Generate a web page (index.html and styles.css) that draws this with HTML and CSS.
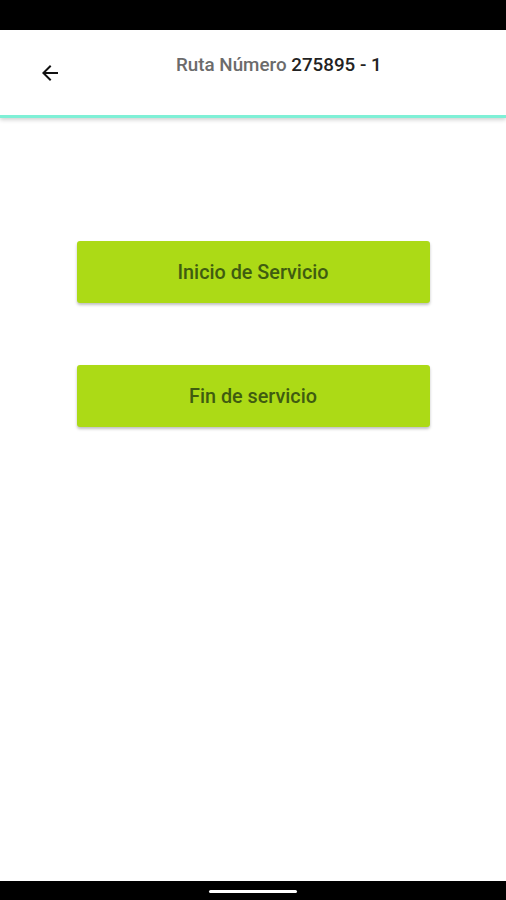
FILE: index.html
```html
<!DOCTYPE html>
<html lang="es">
<head>
    <meta charset="UTF-8">
    <title>Ruta</title>
    <link rel="stylesheet" href="styles.css">
</head>
<body>
<div class="status"></div>
<div class="header">
    <button class="back">
        <svg width="24" height="24" viewBox="0 0 24 24"><path d="M20 11H7.83l5.59-5.59L12 4l-8 8 8 8 1.41-1.41L7.83 13H20v-2z" fill="#111"/></svg>
    </button>
    <div class="title"><span class="label">Ruta Número</span> <span class="num">275895 - 1</span></div>
</div>
<div class="content">
    <button class="action">Inicio de Servicio</button>
    <button class="action">Fin de servicio</button>
</div>
<div class="navbar"><span class="home"></span></div>
</body>
</html>
```

FILE: styles.css
```css
*{
    margin: 0;
    padding: 0;
    box-sizing: border-box;
}
html, body{
    height: 100%;
}
body{
    display: flex;
    flex-direction: column;
    background: #fff;
    font-family: Roboto, "Noto Sans", sans-serif;
}
.status{
    height: 30px;
    background: #000;
}
.header{
    height: 88px;
    display: flex;
    align-items: flex-start;
    border-bottom: 3px solid #7ff0d6;
    box-shadow: 0 2px 4px rgba(0,0,0,0.18);
    position: relative;
}
.back{
    border: none;
    background: none;
    width: 24px;
    height: 24px;
    margin: 31px 0 0 38px;
}
.back svg{
    display: block;
}
.title{
    margin: 24px 0 0 114px;
    font-size: 18.8px;
    font-weight: 500;
}
.label{
    color: #6b6b6b;
}
.num{
    color: #222;
}
.content{
    flex: 1;
    display: flex;
    flex-direction: column;
    align-items: center;
    padding-top: 123px;
    gap: 62px;
}
.action{
    width: 353px;
    height: 62px;
    border: none;
    border-radius: 3px;
    background: #acda16;
    color: #3f5c10;
    font-family: Roboto, sans-serif;
    font-size: 19.8px;
    font-weight: 500;
    box-shadow: 0 2px 3px rgba(0,0,0,0.25);
}
.navbar{
    height: 19px;
    background: #000;
    display: flex;
    justify-content: center;
    padding-top: 9px;
}
.home{
    width: 88px;
    height: 3px;
    border-radius: 2px;
    background: #fff;
}
```
